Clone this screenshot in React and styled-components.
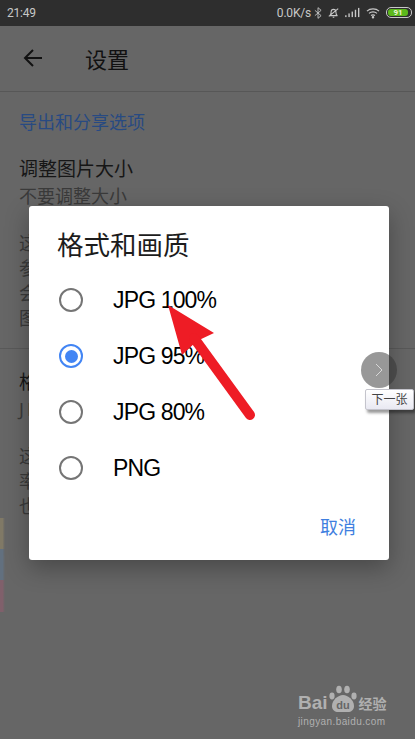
import React from "react";
import styled, { createGlobalStyle } from "styled-components";

const cjk = `"Noto Sans", "Noto Sans CJK SC", sans-serif`;

const Global = createGlobalStyle`
  html, body {
    margin: 0;
    padding: 0;
    background: #666;
  }
  * {
    box-sizing: border-box;
  }
`;

const Screen = styled.div`
  position: relative;
  width: 415px;
  height: 739px;
  overflow: hidden;
  background: #666;
  font-family: ${cjk};
`;

const StatusBar = styled.div`
  height: 26px;
  background: #2e2e2e;
  color: #c8c8c8;
  display: flex;
  align-items: center;
  justify-content: space-between;
  padding: 0 3px 1px 7px;
  font-family: "Roboto", sans-serif;
  font-size: 12px;
  letter-spacing: -0.2px;
`;

const StatusRight = styled.div`
  display: flex;
  align-items: center;
  gap: 6px;
`;

const Speed = styled.span`
  margin-right: -3px;
`;

const Battery = styled.div`
  width: 26px;
  height: 11px;
  border: 1px solid #c8c8c8;
  border-radius: 5px;
  padding: 1px;
  display: flex;
`;

const BatteryFill = styled.div`
  width: 20px;
  border-radius: 3px;
  background: #5cb81c;
  color: #eef6d4;
  font-size: 8px;
  font-weight: 700;
  line-height: 7px;
  text-align: center;
`;

const AppBar = styled.div`
  height: 66px;
  display: flex;
  align-items: center;
  padding: 0 0 2px 23px;
  gap: 42px;
  border-bottom: 1px solid #575757;
  color: #111;
  font-size: 22px;
`;

const Content = styled.div`
  padding: 17px 19px 0;
`;

const SectionTitle = styled.div`
  color: #284a82;
  font-size: 18px;
  line-height: 26px;
`;

const Pref = styled.div`
  margin-top: ${(p) => p.$top}px;
`;

const PrefTitle = styled.div`
  color: #161616;
  font-size: 19px;
  line-height: 27px;
`;

const PrefValue = styled.div`
  color: #3a3a3a;
  font-size: 18px;
  line-height: 26px;
  letter-spacing: ${(p) => (p.$latin ? "3px" : "0")};
`;

const PrefNote = styled.div`
  margin-top: 22px;
  color: #3a3a3a;
  font-size: 18px;
  line-height: 25px;
`;

const Rule = styled.div`
  height: 1px;
  margin: 17px -19px 0;
  background: #595959;
`;

const SideMark = styled.div`
  position: absolute;
  left: 0;
  top: ${(p) => p.$top}px;
  width: 5px;
  height: ${(p) => p.$h}px;
  background: linear-gradient(to right, ${(p) => p.$color} 50%, #666);
`;

const Dialog = styled.div`
  position: absolute;
  left: 29px;
  top: 206px;
  width: 360px;
  height: 354px;
  background: #fff;
  border-radius: 3px;
  box-shadow: 0 8px 24px rgba(0, 0, 0, 0.3);
  padding: 21px 33px 0 28px;
  display: flex;
  flex-direction: column;
`;

const DialogTitle = styled.div`
  color: #1c1c1c;
  font-size: 26.5px;
  line-height: 36px;
`;

const Options = styled.div`
  margin-top: 9px;
  display: flex;
  flex-direction: column;
`;

const Option = styled.div`
  height: 56px;
  display: flex;
  align-items: center;
  gap: 30px;
  padding-left: 2px;
  color: #000;
  font-family: "Liberation Sans", sans-serif;
  font-size: 23px;
  letter-spacing: -0.85px;
`;

const Radio = styled.span`
  width: 24px;
  height: 24px;
  flex: none;
  border-radius: 50%;
  border: 2.5px solid ${(p) => (p.$on ? "#4285f4" : "#757575")};
  display: flex;
  align-items: center;
  justify-content: center;

  &::after {
    content: "";
    display: ${(p) => (p.$on ? "block" : "none")};
    width: 13px;
    height: 13px;
    border-radius: 50%;
    background: #4285f4;
  }
`;

const DialogFoot = styled.div`
  margin-top: auto;
  padding-bottom: 20px;
  display: flex;
  justify-content: flex-end;
  color: #3f7fe0;
  font-size: 18px;
  line-height: 26px;
`;

const Arrow = styled.svg`
  position: absolute;
  left: 160px;
  top: 300px;
`;

const NextButton = styled.div`
  position: absolute;
  left: 361px;
  top: 352px;
  width: 36px;
  height: 36px;
  border-radius: 50%;
  background: rgba(50, 50, 50, 0.5);
  display: flex;
  align-items: center;
  justify-content: center;
`;

const Tooltip = styled.div`
  position: absolute;
  left: 365px;
  top: 389px;
  width: 49px;
  height: 21px;
  border: 1px solid #c4c4cc;
  border-radius: 2px;
  background: linear-gradient(#fff, #e9e9f2);
  box-shadow: 2px 3px 3px rgba(0, 0, 0, 0.4);
  color: #444;
  font-size: 12px;
  line-height: 19px;
  text-align: center;
`;

const Watermark = styled.div`
  position: absolute;
  left: 298px;
  top: 685px;
  color: #b0b0b0;
  display: flex;
  flex-direction: column;
`;

const MarkLogo = styled.div`
  display: flex;
  align-items: flex-end;
  height: 28px;
  font-family: "Liberation Sans", sans-serif;
  font-weight: 700;
  font-size: 19px;
  line-height: 20px;
`;

const MarkWord = styled.span`
  font-family: ${cjk};
  font-size: 14px;
  font-weight: 700;
  line-height: 19px;
  margin-left: 1px;
`;

const MarkUrl = styled.div`
  margin-top: 2px;
  font-family: "Liberation Sans", sans-serif;
  font-size: 10px;
  line-height: 13px;
  letter-spacing: 0.4px;
`;

const options = [
  { label: "JPG 100%" },
  { label: "JPG 95%", on: true },
  { label: "JPG 80%" },
  { label: "PNG" },
];

const BackIcon = () => (
  <svg width="20" height="20" viewBox="0 0 20 20" fill="none" stroke="#111" strokeWidth="2">
    <path d="M19 10H2M10 2l-8 8 8 8" />
  </svg>
);

const SignalIcons = () => (
  <>
    <svg width="8" height="14" viewBox="0 0 9 14" fill="none" stroke="#c8c8c8" strokeWidth="1">
      <path d="M1 4l7 6-3.5 3V1L8 4l-7 6" />
    </svg>
    <svg width="11" height="13" viewBox="0 0 14 14" fill="none" stroke="#c8c8c8" strokeWidth="1.4">
      <path d="M2 11c2-1 2-3 2-5s1.500-3 3-3 3 1 3 3 0 4 2 5zM6 13h2M1 12L13 2" />
    </svg>
    <svg width="15" height="11" viewBox="0 0 16 12" fill="#c8c8c8">
      <rect x="0" y="9" width="1.500" height="2" />
      <rect x="3.500" y="7" width="1.500" height="4" />
      <rect x="7" y="5" width="1.500" height="6" />
      <rect x="10.500" y="3" width="1.500" height="8" />
      <rect x="14" y="1" width="1.500" height="10" />
    </svg>
    <svg width="14" height="12" viewBox="0 0 15 12" fill="none" stroke="#c8c8c8" strokeWidth="1.300">
      <path d="M1 4c3.500-3.200 9.500-3.200 13 0M3.200 6.400c2.300-2 6.300-2 8.600 0M5.400 8.700c1.200-.9 3-.9 4.200 0" />
      <circle cx="7.500" cy="10.600" r=".7" fill="#c8c8c8" />
    </svg>
  </>
);

const Paw = () => (
  <svg width="30" height="28" viewBox="0 0 30 28" fill="#b0b0b0">
    <ellipse cx="4" cy="11" rx="2.600" ry="3.400" />
    <ellipse cx="11" cy="4.500" rx="2.800" ry="3.800" />
    <ellipse cx="19" cy="4.500" rx="2.800" ry="3.800" />
    <ellipse cx="26" cy="11" rx="2.600" ry="3.400" />
    <path d="M15 10c-5 0-11 5-11 11 0 4 3 6 6 6h10c3 0 6-2 6-6 0-6-6-11-11-11z" />
    <text x="15" y="24" fontSize="11" fontWeight="700" textAnchor="middle" fill="#666" fontFamily="Liberation Sans, sans-serif">
      du
    </text>
  </svg>
);

export default function App() {
  return (
    <Screen>
      <Global />
      <StatusBar>
        <span>21:49</span>
        <StatusRight>
          <Speed>0.0K/s</Speed>
          <SignalIcons />
          <Battery>
            <BatteryFill>91</BatteryFill>
          </Battery>
        </StatusRight>
      </StatusBar>
      <AppBar>
        <BackIcon />
        <span>设置</span>
      </AppBar>
      <Content>
        <SectionTitle>导出和分享选项</SectionTitle>
        <Pref $top={21}>
          <PrefTitle>调整图片大小</PrefTitle>
          <PrefValue>不要调整大小</PrefValue>
          <PrefNote>
            这<br />参<br />会<br />图
          </PrefNote>
        </Pref>
        <Rule />
        <Pref $top={20}>
          <PrefTitle>格式和画质</PrefTitle>
          <PrefValue $latin>JPG 95%</PrefValue>
          <PrefNote>
            这<br />率<br />也
          </PrefNote>
        </Pref>
      </Content>
      <SideMark $top={518} $h={31} $color="#807966" />
      <SideMark $top={549} $h={31} $color="#62707f" />
      <SideMark $top={580} $h={32} $color="#80606b" />
      <Dialog>
        <DialogTitle>格式和画质</DialogTitle>
        <Options>
          {options.map((o) => (
            <Option key={o.label}>
              <Radio $on={o.on} />
              {o.label}
            </Option>
          ))}
        </Options>
        <DialogFoot>取消</DialogFoot>
      </Dialog>
      <Arrow width="100" height="125" viewBox="0 0 100 125">
        <path d="M8 5L54 33 37 41 22 55z" fill="#ee1c25" />
        <path d="M34 38L90 115" stroke="#ee1c25" strokeWidth="10" strokeLinecap="round" />
      </Arrow>
      <NextButton>
        <svg width="10" height="16" viewBox="0 0 10 16" fill="none" stroke="#d8d8d8" strokeWidth="1">
          <path d="M2 2l6 6-6 6" />
        </svg>
      </NextButton>
      <Tooltip>下一张</Tooltip>
      <Watermark>
        <MarkLogo>
          Bai
          <Paw />
          <MarkWord>经验</MarkWord>
        </MarkLogo>
        <MarkUrl>jingyan.baidu.com</MarkUrl>
      </Watermark>
    </Screen>
  );
}
